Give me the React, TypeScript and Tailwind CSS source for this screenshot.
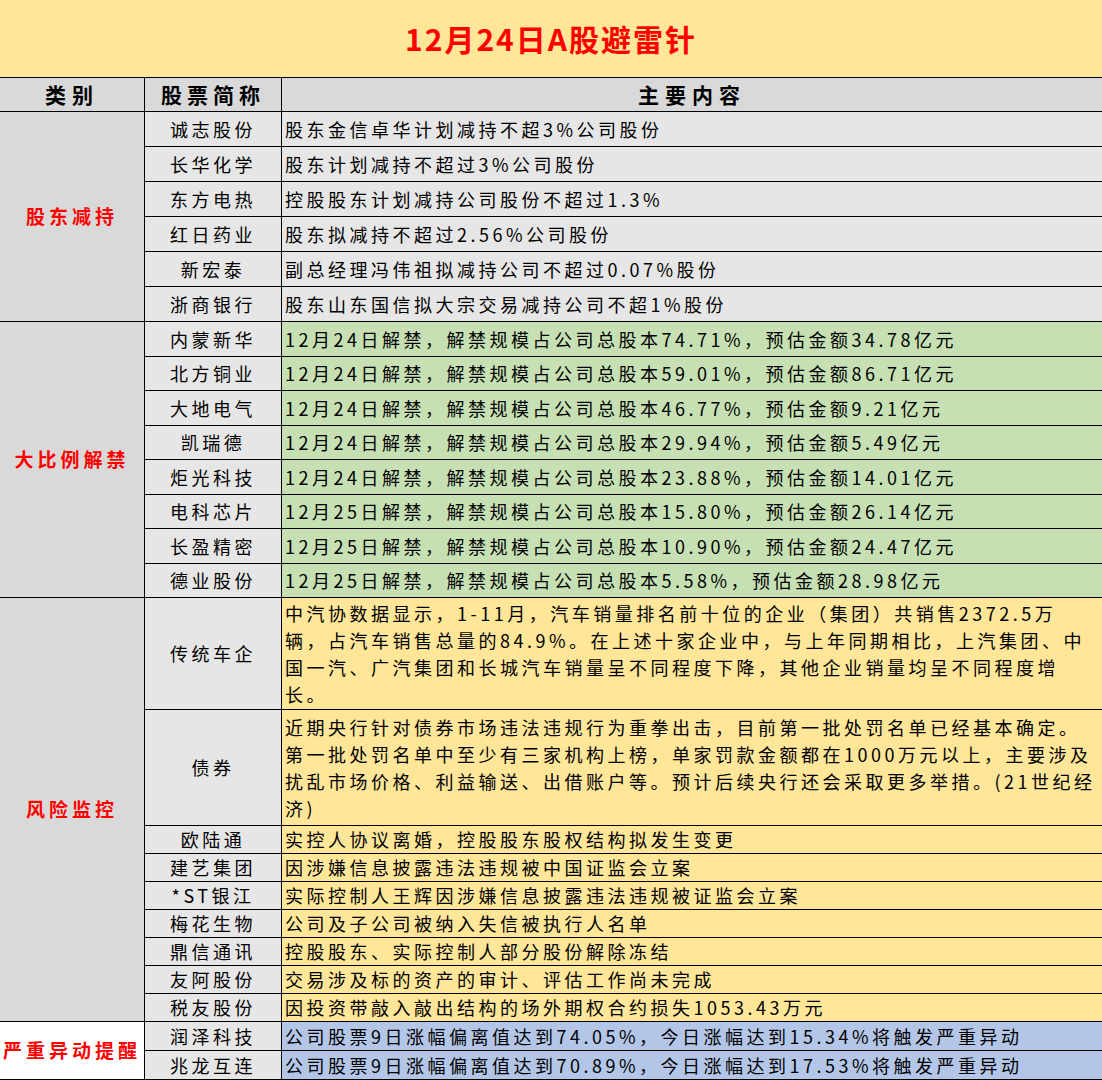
import React from "react";

type Row = { name: string; text: string; h: number };
type Section = { cat: string; bg: string; rows: Row[] };

const sections: Section[] = [
  {
    cat: "股东减持",
    bg: "bg-[#e7e6e6]",
    rows: [
      { name: "诚志股份", text: "股东金信卓华计划减持不超3%公司股份", h: 35 },
      { name: "长华化学", text: "股东计划减持不超过3%公司股份", h: 35 },
      { name: "东方电热", text: "控股股东计划减持公司股份不超过1.3%", h: 35 },
      { name: "红日药业", text: "股东拟减持不超过2.56%公司股份", h: 35 },
      { name: "新宏泰", text: "副总经理冯伟祖拟减持公司不超过0.07%股份", h: 35 },
      { name: "浙商银行", text: "股东山东国信拟大宗交易减持公司不超1%股份", h: 35 },
    ],
  },
  {
    cat: "大比例解禁",
    bg: "bg-[#c6e0b4]",
    rows: [
      { name: "内蒙新华", text: "12月24日解禁，解禁规模占公司总股本74.71%，预估金额34.78亿元", h: 35 },
      { name: "北方铜业", text: "12月24日解禁，解禁规模占公司总股本59.01%，预估金额86.71亿元", h: 34 },
      { name: "大地电气", text: "12月24日解禁，解禁规模占公司总股本46.77%，预估金额9.21亿元", h: 35 },
      { name: "凯瑞德", text: "12月24日解禁，解禁规模占公司总股本29.94%，预估金额5.49亿元", h: 34 },
      { name: "炬光科技", text: "12月24日解禁，解禁规模占公司总股本23.88%，预估金额14.01亿元", h: 35 },
      { name: "电科芯片", text: "12月25日解禁，解禁规模占公司总股本15.80%，预估金额26.14亿元", h: 34 },
      { name: "长盈精密", text: "12月25日解禁，解禁规模占公司总股本10.90%，预估金额24.47亿元", h: 35 },
      { name: "德业股份", text: "12月25日解禁，解禁规模占公司总股本5.58%，预估金额28.98亿元", h: 34 },
    ],
  },
  {
    cat: "风险监控",
    bg: "bg-[#ffe699]",
    rows: [
      {
        name: "传统车企",
        text: "中汽协数据显示，1-11月，汽车销量排名前十位的企业（集团）共销售2372.5万辆，占汽车销售总量的84.9%。在上述十家企业中，与上年同期相比，上汽集团、中国一汽、广汽集团和长城汽车销量呈不同程度下降，其他企业销量均呈不同程度增长。",
        h: 112,
      },
      {
        name: "债券",
        text: "近期央行针对债券市场违法违规行为重拳出击，目前第一批处罚名单已经基本确定。第一批处罚名单中至少有三家机构上榜，单家罚款金额都在1000万元以上，主要涉及扰乱市场价格、利益输送、出借账户等。预计后续央行还会采取更多举措。(21世纪经济)",
        h: 116,
      },
      { name: "欧陆通", text: "实控人协议离婚，控股股东股权结构拟发生变更", h: 28 },
      { name: "建艺集团", text: "因涉嫌信息披露违法违规被中国证监会立案", h: 28 },
      { name: "*ST银江", text: "实际控制人王辉因涉嫌信息披露违法违规被证监会立案", h: 28 },
      { name: "梅花生物", text: "公司及子公司被纳入失信被执行人名单", h: 28 },
      { name: "鼎信通讯", text: "控股股东、实际控制人部分股份解除冻结", h: 28 },
      { name: "友阿股份", text: "交易涉及标的资产的审计、评估工作尚未完成", h: 28 },
      { name: "税友股份", text: "因投资带敲入敲出结构的场外期权合约损失1053.43万元", h: 28 },
    ],
  },
  {
    cat: "严重异动提醒",
    bg: "bg-[#b4c6e7]",
    rows: [
      { name: "润泽科技", text: "公司股票9日涨幅偏离值达到74.05%，今日涨幅达到15.34%将触发严重异动", h: 29 },
      { name: "兆龙互连", text: "公司股票9日涨幅偏离值达到70.89%，今日涨幅达到17.53%将触发严重异动", h: 29 },
    ],
  },
];

const font = { fontFamily: '"Noto Sans CJK SC", "DejaVu Serif", serif' };

export default function App() {
  return (
    <div className="w-[1102px] h-[1080px] overflow-hidden bg-white text-black" style={font}>
      <div className="h-[78px] bg-[#ffe699] border-b border-black flex items-center justify-center">
        <span className="text-[30px] font-bold text-[#ff0000] tracking-[2px]">12月24日A股避雷针</span>
      </div>
      <div className="flex h-[34px] bg-[#d9d9d9] border-b border-black text-[21px] font-bold">
        <div className="w-[145px] flex items-center justify-center border-r border-black tracking-[6px]">类别</div>
        <div className="w-[137px] flex items-center justify-center border-r border-black tracking-[5px]">股票简称</div>
        <div className="flex-1 flex items-center justify-center tracking-[6px]">主要内容</div>
      </div>
      {sections.map((s) => (
        <div key={s.cat} className="flex border-b border-black">
          <div className={`w-[145px] shrink-0 border-r border-black flex items-center justify-center text-[19px] font-bold text-[#ff0000] tracking-[4px] ${s.cat === "严重异动提醒" ? "bg-white" : "bg-[#d9d9d9]"}`}>
            {s.cat}
          </div>
          <div className="flex-1 flex flex-col">
            {s.rows.map((r, i) => (
              <div
                key={r.name}
                className={`flex ${i < s.rows.length - 1 ? "border-b border-black" : ""}`}
                style={{ height: r.h - (i < s.rows.length - 1 ? 0 : 1) }}
              >
                <div className="w-[137px] shrink-0 bg-[#e7e6e6] border-r border-black flex items-center justify-center text-[18px] tracking-[3.5px]">
                  {r.name}
                </div>
                <div className={`flex-1 ${s.bg} flex items-center px-[3px] text-[18px] leading-[27px] tracking-[3.5px]`}>
                  {r.text}
                </div>
              </div>
            ))}
          </div>
        </div>
      ))}
    </div>
  );
}
